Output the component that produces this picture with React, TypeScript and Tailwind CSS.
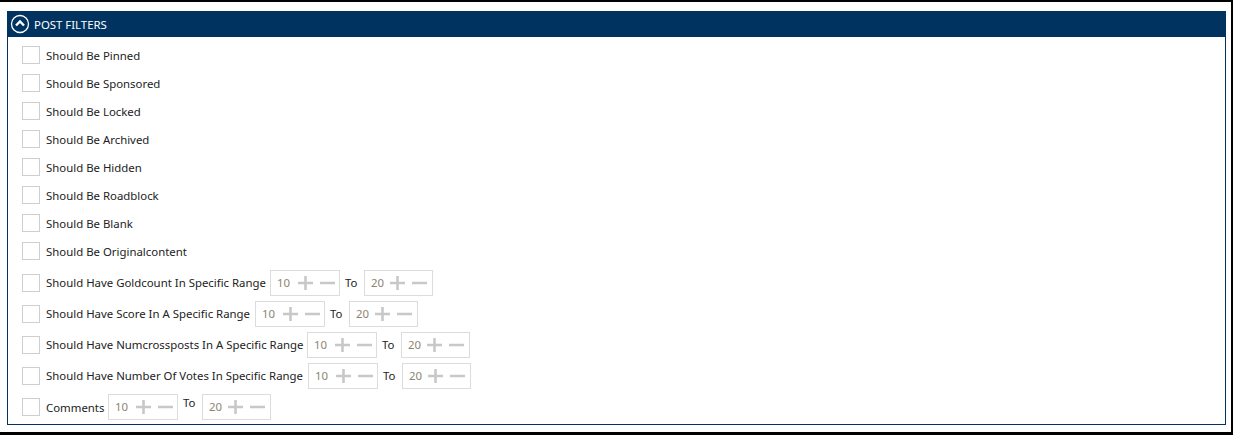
const checks = [
  "Should Be Pinned",
  "Should Be Sponsored",
  "Should Be Locked",
  "Should Be Archived",
  "Should Be Hidden",
  "Should Be Roadblock",
  "Should Be Blank",
  "Should Be Originalcontent",
];

const ranges = [
  { label: "Should Have Goldcount In Specific Range", width: "w-[220px]" },
  { label: "Should Have Score In A Specific Range", width: "w-[205px]" },
  { label: "Should Have Numcrossposts In A Specific Range", width: "w-[257px]" },
  { label: "Should Have Number Of Votes In Specific Range", width: "w-[258px]" },
];

const Box = () => <div className="w-[18px] h-[18px] shrink-0 border border-[#cfcfcf] bg-white" />;

const Spinner = ({ value }: { value: number }) => (
  <div className={`flex items-center h-[26px] pl-[6px] border border-[#dcdcdc] bg-white ${value === 10 ? "w-[70px]" : "w-[69px]"}`}>
    <span className={`text-[#8c8474] pt-[1px] ${value === 10 ? "w-[21px]" : "w-[19px]"}`}>{value}</span>
    <svg width="37" height="14" viewBox="0 0 37 14" className="shrink-0">
      <path d="M0 7h15M7.5 0v14M22 7h15" stroke="#c8c8c8" strokeWidth="2.6" fill="none" />
    </svg>
  </div>
);

const RangeRow = ({ label, width }: { label: string; width: string }) => (
  <div className="flex items-center h-[31px]">
    <Box />
    <span className={`ml-[6px] mr-[4px] pt-[1px] whitespace-nowrap ${width}`}>{label}</span>
    <Spinner value={10} />
    <span className="ml-[5px] w-[19px] pt-[1px]">To</span>
    <Spinner value={20} />
  </div>
);

export default function App() {
  return (
    <div className="w-[1233px] h-[435px] overflow-hidden bg-white border-t-2 border-r-2 border-b-[3px] border-black text-[11.4px] text-[#222] font-['Noto_Sans','Open_Sans',sans-serif] pt-[9px] pl-[7px] pr-[5px] pb-[7px]">
      <div className="h-full border border-[#00335f] flex flex-col">
        <div className="h-[26px] -mx-px -mt-px shrink-0 bg-[#00335f] text-white flex items-center pl-[3px] gap-[4px]">
          <svg width="20" height="20" viewBox="0 0 20 20">
            <circle cx="10" cy="10" r="8.5" stroke="white" strokeWidth="1.3" fill="none" />
            <path d="M6 11.5l4-4 4 4" stroke="white" strokeWidth="2.4" fill="none" />
          </svg>
          <span className="pt-[1px]">POST FILTERS</span>
        </div>
        <div className="pl-[14px] pt-[4px] flex flex-col">
          {checks.map((c) => (
            <div key={c} className="flex items-center h-[28px]">
              <Box />
              <span className="ml-[6px] pt-[1px]">{c}</span>
            </div>
          ))}
          <div className="h-[2px]" />
          {ranges.map((r) => (
            <RangeRow key={r.label} label={r.label} width={r.width} />
          ))}
          <div className="flex items-center h-[31px]">
            <Box />
            <span className="ml-[6px] mr-[4px] pt-[2px] w-[58px]">Comments</span>
            <Spinner value={10} />
            <span className="ml-[5px] w-[19px] -mt-[7px]">To</span>
            <Spinner value={20} />
          </div>
        </div>
      </div>
    </div>
  );
}
